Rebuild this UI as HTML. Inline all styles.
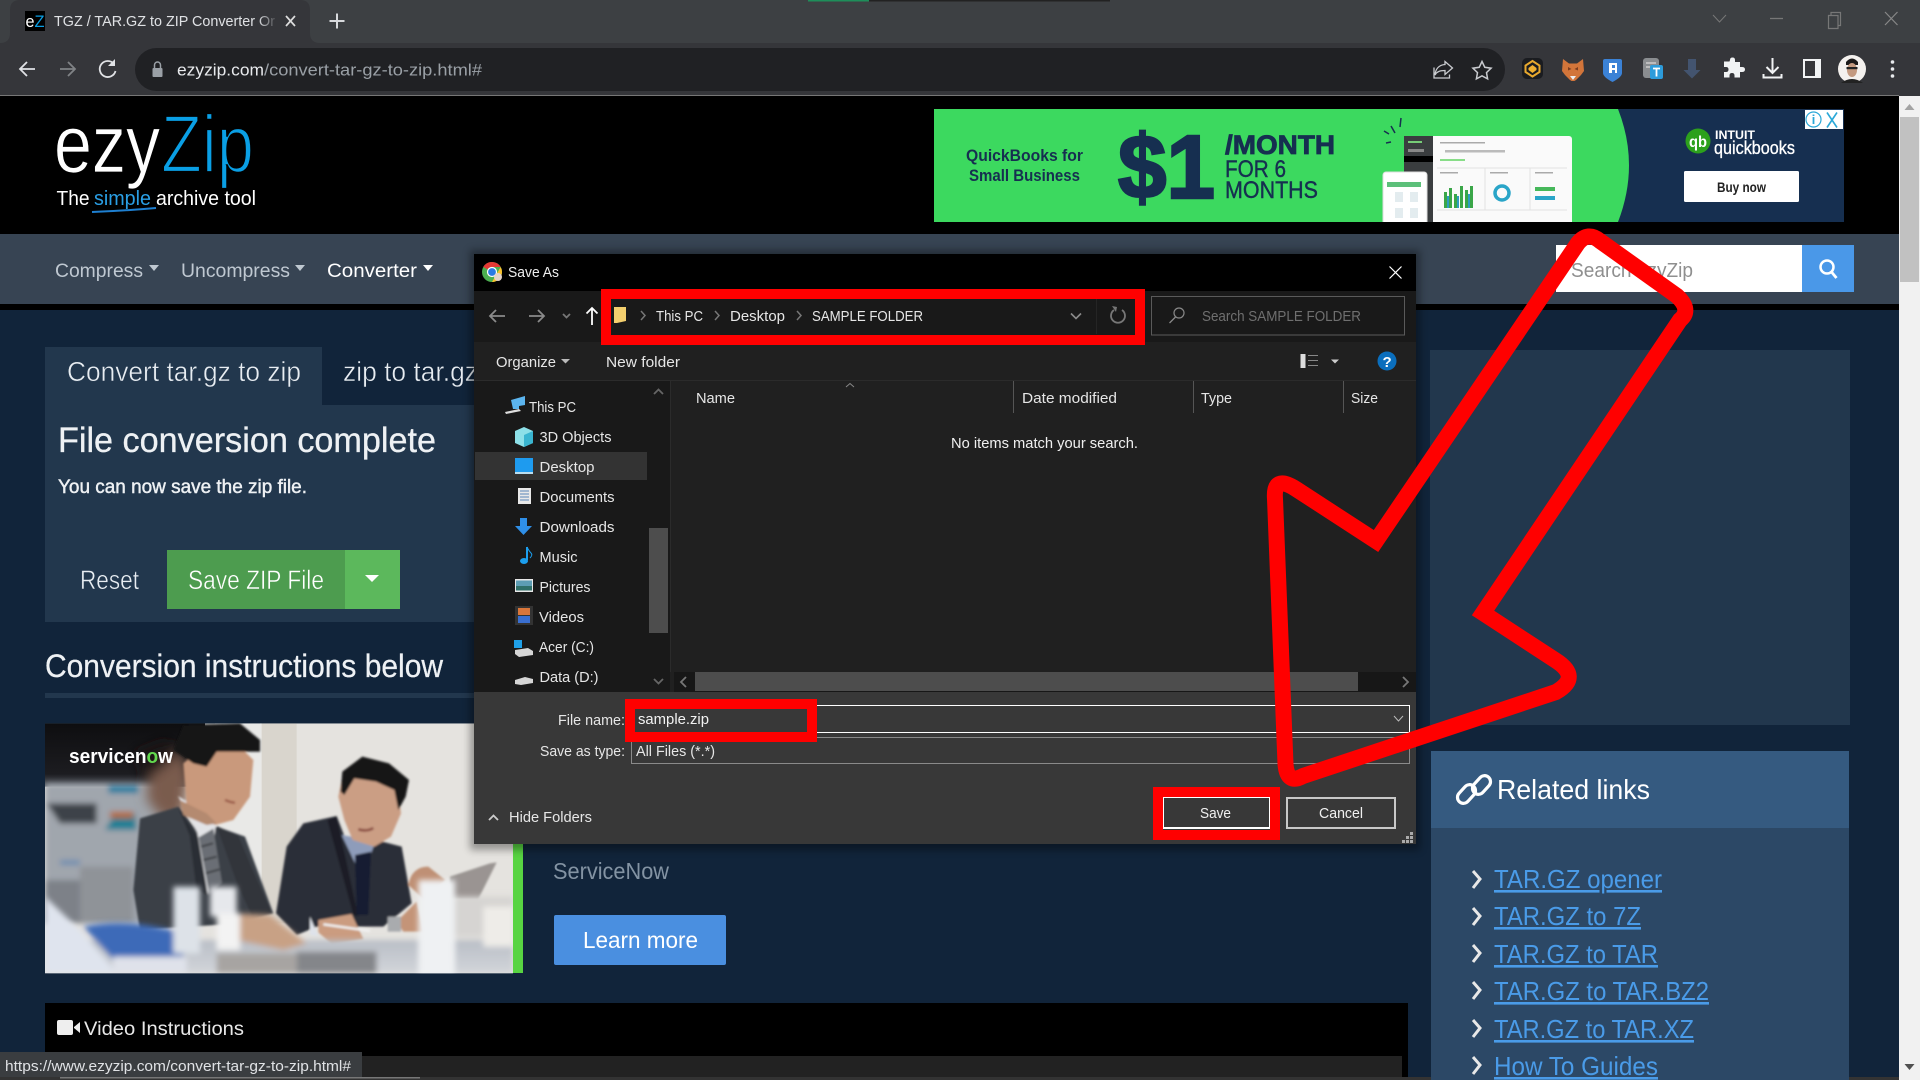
<!DOCTYPE html>
<html><head><meta charset="utf-8"><title>TGZ / TAR.GZ to ZIP Converter</title>
<style>
html,body{margin:0;padding:0;width:1920px;height:1080px;overflow:hidden;background:#11243a}
svg{display:block;position:absolute;left:0;top:0}
text{font-family:"Liberation Sans",sans-serif;white-space:pre}
.d{font-size:14.5px;fill:#e6e6e6}
</style></head><body>
<svg width="1920" height="1080" viewBox="0 0 1920 1080" xmlns="http://www.w3.org/2000/svg">
<defs>
<filter id="b1"><feGaussianBlur stdDeviation="1.5"/></filter>
<filter id="b3"><feGaussianBlur stdDeviation="4"/></filter>
<filter id="p2"><feGaussianBlur stdDeviation="3"/></filter>
<filter id="p8"><feGaussianBlur stdDeviation="9"/></filter>
<filter id="p16"><feGaussianBlur stdDeviation="18"/></filter>
<linearGradient id="fade" x1="0" x2="1"><stop offset="0" stop-color="#35363a" stop-opacity="0"/><stop offset="1" stop-color="#35363a"/></linearGradient>
<linearGradient id="tbl" x1="0" y1="0" x2="0" y2="1"><stop offset="0" stop-color="#b9bec6"/><stop offset="1" stop-color="#d2d5da"/></linearGradient>
<linearGradient id="dk" x1="0" y1="0" x2="0" y2="1"><stop offset="0" stop-color="#0e0e10"/><stop offset=".8" stop-color="#1c1c20"/><stop offset="1" stop-color="#555a62"/></linearGradient>
<clipPath id="ph"><rect x="15" y="10" width="1404" height="750"/></clipPath>
<clipPath id="adc"><rect x="934" y="109" width="910" height="113"/></clipPath>
</defs>

<!-- page -->
<rect width="1920" height="1080" fill="#11243a"/>
<rect y="96" width="1899" height="138" fill="#000"/>
<rect y="234" width="1899" height="70" fill="#374453"/>
<rect y="304" width="1899" height="6" fill="#000"/>

<!-- chrome -->
<rect width="1920" height="43" fill="#3d4043"/>
<rect x="808" y="0" width="61" height="1.5" fill="#1e8e5a"/><rect x="869" y="0" width="241" height="1.5" fill="#222"/>
<path d="M0 43q10 0 10-10V10Q10 0 20 0H300q10 0 10 10V33q0 10 10 10z" fill="#35363a"/>
<rect y="43" width="1920" height="53" fill="#35363a"/>
<rect y="95" width="1899" height="1" fill="#777"/>
<rect x="25" y="11" width="20" height="20" fill="#000"/>
<text x="25.5" y="27" font-size="17" fill="#fff" textLength="9" lengthAdjust="spacingAndGlyphs">e</text>
<text x="34.5" y="27" font-size="17" fill="#0a9fe5" textLength="10" lengthAdjust="spacingAndGlyphs">Z</text>
<text x="54" y="26" font-size="14.5" fill="#e0e2e5" textLength="221" lengthAdjust="spacingAndGlyphs">TGZ / TAR.GZ to ZIP Converter Or</text>
<rect x="258" y="10" width="20" height="24" fill="url(#fade)"/>
<path d="M286 16l9 10M295 16l-9 10" stroke="#ddd" stroke-width="1.7"/>
<path d="M337 13.5v15M329.5 21h15" stroke="#d8dadd" stroke-width="2"/>
<path d="M35 69H20M27 62l-7 7 7 7" stroke="#e0e2e5" stroke-width="1.8" fill="none"/>
<path d="M75 69H60M68 62l7 7-7 7" stroke="#808386" stroke-width="1.8" fill="none"/>
<path d="M114 64a8 8 0 1 0 1.5 7" stroke="#e0e2e5" stroke-width="1.8" fill="none"/><path d="M115 59v7h-7z" fill="#e0e2e5"/>
<rect x="135" y="48" width="1370" height="43" rx="21.5" fill="#202124"/>
<rect x="152.5" y="68" width="10" height="9" rx="1" fill="#9aa0a6"/><path d="M154.5 68v-3a3 3 0 0 1 6 0v3" stroke="#9aa0a6" stroke-width="1.5" fill="none"/>
<text x="177" y="75.500" font-size="16.500" fill="#e8eaed" textLength="87" lengthAdjust="spacingAndGlyphs">ezyzip.com</text>
<text x="264" y="75.500" font-size="16.500" fill="#9aa0a6" textLength="218" lengthAdjust="spacingAndGlyphs">/convert-tar-gz-to-zip.html#</text>
<!-- win controls -->
<path d="M1713 15l6.500 7 6.500-7" stroke="#777" stroke-width="1" fill="none"/>
<path d="M1770 18.500h13" stroke="#777" stroke-width="1.300"/>
<path d="M1828.500 15.500h9.500v13h-9.500zM1831 15.500v-3h9.500v13h-2.500" stroke="#777" stroke-width="1.200" fill="none"/>
<path d="M1885 12l12.500 13M1897.500 12l-12.500 13" stroke="#888" stroke-width="1.200"/>
<!-- toolbar icons -->
<path d="M1434 67.500v10.500h15.500v-3.500M1445 61.500l7.500 6.500-7.500 6.500v-4c-5 0-8 1-10 4.500 .5-6 4-10 10-10.500z" stroke="#c9cbcf" stroke-width="1.300" fill="none"/>
<path d="M1482 61.500l2.800 5.800 6.300.9-4.600 4.400 1.100 6.300-5.600-3-5.600 3 1.100-6.300-4.600-4.400 6.300-.9z" stroke="#c9cbcf" stroke-width="1.500" fill="none"/>
<rect x="1522" y="58" width="21" height="21" rx="5" fill="#1a1c20"/><path d="M1532.500 61l7 4.500v6.500l-7 4.500-7-4.500v-6.500z" fill="none" stroke="#e8a92e" stroke-width="2"/><path d="M1532.500 65l4 3v2l-4 3-4-3v-2z" fill="#f0b030"/>
<path d="M1563 59l6 4.500h8l6-4.500 1 12-3 4-5 5-1.500 1h-3l-1.500-1-5-5-3-4z" fill="#d2753a"/><path d="M1568 67l3.500 2-3.500 1.500zM1578 67l-3.500 2 3.500 1.500z" fill="#7a3d20"/><path d="M1570 76l3 4 3-4z" fill="#eee"/>
<path d="M1605 59h15q2 0 2 2v12q0 4-9.500 9-9.500-5-9.500-9V61q0-2 2-2z" fill="#3b82d6"/><path d="M1609 63h8v10h-2v-3h-3v3h-3zM1612 65v3h3v-3z" fill="#fff"/>
<rect x="1643" y="58" width="16" height="20" rx="3" fill="#8a8d90"/><path d="M1646 63h10M1646 67h6" stroke="#ccc" stroke-width="1.500"/>
<rect x="1650" y="65" width="13" height="14" rx="2" fill="#2d9cdb"/><path d="M1653 68.500h7M1656.500 68.500v8" stroke="#fff" stroke-width="1.800"/>
<path d="M1688 59h8v11h4.500l-8.500 8.500-8.500-8.500h4.500z" fill="#43546f"/>
<path d="M1730 60q0-2.500 2.500-2.500t2.500 2.500v2h5v5h2q3 0 3 2.500t-3 2.500h-2v5.500h-5.500v-2q0-2.500-2.500-2.500t-2.500 2.500v2h-5.500v-5.500h2q2.500 0 2.500-2.500t-2.500-2.500h-2v-5.500h5.500z" fill="#f1f3f4"/>
<path d="M1772.500 58v14M1766.500 67l6 6 6-6M1763.500 74v3.500h18V74" stroke="#f1f3f4" stroke-width="2" fill="none"/>
<rect x="1804" y="60" width="16" height="17" fill="#35363a" stroke="#f1f3f4" stroke-width="2"/><rect x="1815" y="60" width="6" height="17" fill="#f1f3f4"/>
<circle cx="1852" cy="69" r="14" fill="#f4f1ee"/><path d="M1846 62q6-7 12 0v3h-12z" fill="#1c1a1a"/><ellipse cx="1852" cy="70" rx="5" ry="7" fill="#c49a80"/><path d="M1841 83q11-8 22 0l-3 0h-16z" fill="#222"/><rect x="1846.500" y="67" width="11" height="2.200" fill="#222"/>
<circle cx="1892.500" cy="62" r="1.800" fill="#e8eaed"/><circle cx="1892.500" cy="69" r="1.800" fill="#e8eaed"/><circle cx="1892.500" cy="76" r="1.800" fill="#e8eaed"/>

<!-- logo -->
<text x="54" y="172" font-size="82" fill="#fff" stroke="#000" stroke-width=".8" textLength="106" lengthAdjust="spacingAndGlyphs">ezy</text>
<text x="161" y="172" font-size="82" fill="#0a9fe5" stroke="#000" stroke-width="2.200" textLength="93" lengthAdjust="spacingAndGlyphs">Zip</text>
<text x="56.500" y="205" font-size="20.500" fill="#fff" textLength="33" lengthAdjust="spacingAndGlyphs">The</text>
<text x="94" y="205" font-size="20.500" fill="#2a9fe5" textLength="57" lengthAdjust="spacingAndGlyphs">simple</text>
<text x="156" y="205" font-size="20.500" fill="#fff" textLength="100" lengthAdjust="spacingAndGlyphs">archive tool</text>
<path d="M92 212q30-1 64-4" stroke="#1e7fd0" stroke-width="2" fill="none"/>

<!-- nav -->
<text x="55" y="277" font-size="19.500" fill="#bfc8d1" textLength="88" lengthAdjust="spacingAndGlyphs">Compress</text>
<path d="M149 265h10l-5 6z" fill="#bfc8d1"/>
<text x="181" y="277" font-size="19.500" fill="#bfc8d1" textLength="109" lengthAdjust="spacingAndGlyphs">Uncompress</text>
<path d="M295 265h10l-5 6z" fill="#bfc8d1"/>
<text x="327" y="277" font-size="19.500" fill="#fff" textLength="90" lengthAdjust="spacingAndGlyphs">Converter</text>
<path d="M423 265h10l-5 6z" fill="#fff"/>
<rect x="1556" y="245" width="246" height="47" fill="#fff"/>
<rect x="1802" y="245" width="52" height="47" fill="#4a98e8"/>
<circle cx="1827" cy="267" r="6.500" fill="none" stroke="#fff" stroke-width="2.500"/><path d="M1831.500 272l5 6" stroke="#fff" stroke-width="2.800"/>
<text x="1571" y="277" font-size="20.500" fill="#8f8f8f" textLength="122" lengthAdjust="spacingAndGlyphs">Search ezyZip</text>

<!-- ad banner -->
<g clip-path="url(#adc)">
<rect x="934" y="109" width="910" height="113" fill="#3cd95f"/>
<path d="M1618 109q22 56 0 113H1844V109z" fill="#162f50"/>
<g fill="#162f50">
<text x="966" y="161" font-size="16.500" font-weight="bold" textLength="117" lengthAdjust="spacingAndGlyphs">QuickBooks for</text>
<text x="969" y="181" font-size="16.500" font-weight="bold" textLength="111" lengthAdjust="spacingAndGlyphs">Small Business</text>
<text x="1118" y="198" font-size="90" font-weight="bold" stroke="#162f50" stroke-width="2.500" textLength="97" lengthAdjust="spacingAndGlyphs">$1</text>
<text x="1225" y="154" font-size="27" font-weight="bold" stroke="#162f50" stroke-width=".8" textLength="110" lengthAdjust="spacingAndGlyphs">/MONTH</text>
<text x="1225" y="177" font-size="24" stroke="#162f50" stroke-width=".4" textLength="61" lengthAdjust="spacingAndGlyphs">FOR 6</text>
<text x="1225" y="198" font-size="24" stroke="#162f50" stroke-width=".4" textLength="93" lengthAdjust="spacingAndGlyphs">MONTHS</text>
</g>
<path d="M1384 131l5 3M1391 126l4 7M1401 118l-1 9M1386 143l5-1" stroke="#162f50" stroke-width="1.500"/>
<rect x="1404" y="136" width="168" height="90" rx="3" fill="#fafafa"/>
<rect x="1404" y="136" width="29" height="90" fill="#3a3d3f"/>
<rect x="1404" y="156" width="29" height="6" fill="#000"/>
<rect x="1408" y="141" width="14" height="2" fill="#7c7"/><rect x="1408" y="149" width="16" height="3" fill="#888"/>
<rect x="1440" y="142" width="45" height="1.500" fill="#aaa"/><rect x="1445" y="150" width="60" height="2.500" fill="#bbb"/><rect x="1440" y="159" width="25" height="2" fill="#8d8"/>
<path d="M1437 168h130M1437 210h130M1485 168v42M1530 168v42" stroke="#e2e2e2"/>
<rect x="1440" y="172" width="18" height="1.500" fill="#aaa"/><rect x="1490" y="172" width="18" height="1.500" fill="#aaa"/><rect x="1535" y="172" width="18" height="1.500" fill="#aaa"/>
<g fill="#3aa648"><rect x="1444" y="192" width="3" height="16"/><rect x="1449" y="188" width="3" height="20"/><rect x="1454" y="194" width="3" height="14"/><rect x="1460" y="186" width="3" height="22"/><rect x="1465" y="190" width="3" height="18"/><rect x="1470" y="186" width="3" height="22"/></g>
<g fill="#2d9cc0"><rect x="1447" y="196" width="2" height="12"/><rect x="1457" y="196" width="2" height="12"/><rect x="1468" y="194" width="2" height="14"/></g>
<circle cx="1502" cy="193" r="7" fill="none" stroke="#2aa5c8" stroke-width="3.500"/>
<rect x="1535" y="187" width="20" height="4" fill="#46b85a"/><rect x="1535" y="196" width="20" height="4" fill="#2aa5c8"/>
<rect x="1383" y="172" width="44" height="60" rx="3" fill="#fff" stroke="#ddd"/><rect x="1387" y="182" width="34" height="5" fill="#5cc07a"/>
<path d="M1395 192h8v10h-8zM1410 192h8v10h-8zM1395 208h8v10h-8zM1410 208h8v10h-8z" fill="#e3ecef"/>
<circle cx="1698" cy="141" r="12.500" fill="#2ca01c"/>
<text x="1689" y="147" font-size="16" font-weight="bold" fill="#fff" textLength="18" lengthAdjust="spacingAndGlyphs">qb</text>
<text x="1715" y="139" font-size="11.500" font-weight="bold" fill="#fff" textLength="40" lengthAdjust="spacingAndGlyphs">INTUIT</text>
<text x="1714" y="154" font-size="18" fill="#fff" stroke="#fff" stroke-width=".3" textLength="81" lengthAdjust="spacingAndGlyphs">quickbooks</text>
<rect x="1684" y="171" width="115" height="31" rx="1.500" fill="#fff"/>
<text x="1717" y="192" font-size="14" font-weight="bold" fill="#222" textLength="49" lengthAdjust="spacingAndGlyphs">Buy now</text>
<rect x="1805" y="110" width="38" height="19" fill="#fff"/>
<circle cx="1813.500" cy="119.500" r="7.500" fill="none" stroke="#2aa8d8" stroke-width="1.200"/><path d="M1813.500 117v7M1813.500 114.500v1.500" stroke="#2aa8d8" stroke-width="1.800"/>
<path d="M1827 112.500l10 15M1837 112.500l-10 15" stroke="#2aa8d8" stroke-width="1.600"/>
</g>

<!-- scrollbar -->
<rect x="1899" y="96" width="21" height="984" fill="#f1f1f1"/>
<rect x="1900" y="117" width="19" height="165" fill="#c1c1c1"/>
<path d="M1904.500 110l5-6 5 6z" fill="#a3a3a3"/>
<path d="M1904.500 1064l5 6 5-6z" fill="#505050"/>

<!-- left content -->
<rect x="45" y="347" width="277" height="58" fill="#22374d"/>
<rect x="45" y="405" width="1360" height="217" fill="#22374d"/>
<text x="67" y="381" font-size="27.500" fill="#e8edf2" stroke="#22374d" stroke-width=".5" textLength="234" lengthAdjust="spacingAndGlyphs">Convert tar.gz to zip</text>
<text x="343" y="381" font-size="27.500" fill="#e8edf2" stroke="#11243a" stroke-width=".5" textLength="135" lengthAdjust="spacingAndGlyphs">zip to tar.gz</text>
<text x="58" y="452" font-size="35" fill="#eef1f4" stroke="#eef1f4" stroke-width=".3" textLength="378" lengthAdjust="spacingAndGlyphs">File conversion complete</text>
<text x="58" y="493" font-size="19.500" fill="#eef1f4" stroke="#eef1f4" stroke-width=".45" textLength="249" lengthAdjust="spacingAndGlyphs">You can now save the zip file.</text>
<text x="80" y="589" font-size="27" fill="#e8edf2" stroke="#22374d" stroke-width=".5" textLength="59" lengthAdjust="spacingAndGlyphs">Reset</text>
<rect x="167" y="550" width="178" height="59" fill="#4d9c4f"/>
<rect x="345" y="550" width="55" height="59" fill="#5cb85c"/>
<text x="188" y="589" font-size="27" fill="#fff" stroke="#4d9c4f" stroke-width=".5" textLength="136" lengthAdjust="spacingAndGlyphs">Save ZIP File</text>
<path d="M365 575h14l-7 7z" fill="#fff"/>
<text x="45" y="677" font-size="32" fill="#eef1f4" stroke="#eef1f4" stroke-width=".25" textLength="398" lengthAdjust="spacingAndGlyphs">Conversion instructions below</text>
<rect x="45" y="693" width="430" height="5" fill="#22374d"/>

<!-- photo ad: coordinates in 3x crop space -->
<g transform="translate(40 720) scale(.33333)">
<g clip-path="url(#ph)">
<rect x="15" y="10" width="1404" height="750" fill="#e5e3df"/>
<rect x="660" y="10" width="110" height="600" fill="#d9d5cd"/>
<rect x="525" y="10" width="140" height="500" fill="#e9e9e7"/>
<rect x="15" y="10" width="480" height="190" fill="url(#dk)"/>
<g filter="url(#p8)">
<rect x="15" y="190" width="380" height="420" fill="#a0a6ad"/>
<rect x="15" y="480" width="120" height="130" fill="#7d8188"/>
<path d="M20 250h150v60H60z" fill="#3e4248"/>
<rect x="205" y="195" width="90" height="25" fill="#2a7fa0"/>
<path d="M195 330l30-50 60 0 5 50z" fill="#1f7f94"/>
<rect x="210" y="275" width="70" height="20" fill="#b56a3a"/>
<rect x="60" y="420" width="60" height="15" fill="#6f8db0"/>
<rect x="120" y="440" width="160" height="170" fill="#8f9398"/>
</g>
<g filter="url(#p16)">
<path d="M330 110l90-20 30 70-20 130-60 10-50-60z" fill="#7a5c4e"/>
<path d="M280 100l100-40 30 50-90 70z" fill="#1a1614"/>
</g>
<g filter="url(#p2)">
<!-- man 1 -->
<path d="M280 510l20-215 115-35 70 90 45-30 85 30 35 95 50 135-100 30-300 20z" fill="#3b3f47"/>
<path d="M414 228l115 70-25 230-32-190z" fill="#e2e3e6"/>
<path d="M414 262l60 90 30 175-35-20-20-160z" fill="#2b2e34"/>
<path d="M476 352l44-26 26 162-38 35z" fill="#6a6e74"/>
<path d="M483 380l36-10M490 420l40-10M497 460l42-12" stroke="#3c3f44" stroke-width="6"/>
<path d="M530 318l65 30 40 95 60 135-60 8-45-100z" fill="#31343b"/>
<path d="M430 130l60-50 100-10 50 50-10 110-50 70-55 15-85-55z" fill="#c9997c"/>
<path d="M420 240l80 40 30 30-30 5-70-30z" fill="#b48a70"/>
<path d="M400 90l30-75 170-5 60 50 0 35-60 0-70 0-30 45-40-10z" fill="#121316"/>
<path d="M555 240q20 8 30 8" stroke="#9b5b4a" stroke-width="7"/>
<!-- man 2 -->
<path d="M708 580l32-200 50-70 100-22 50 130 60-60 85 22 30 170-85 70-200 0-60 25z" fill="#2c2f38"/>
<path d="M905 345l102 18-15 40-45 30z" fill="#8e9cba"/>
<path d="M862 300l28-10 65 300-15-5z" fill="#1d1f25"/>
<path d="M945 405l48-10-8 190-35 0z" fill="#141d33"/>
<path d="M895 230l15-70 90-10 75 70 8 60-30 70-50 30-65-20-25-60z" fill="#cb9e84"/>
<path d="M902 215l5-60 60-45 80 20 60 50-10 50-22 40-12-60-55-25-65-10-30 50z" fill="#141518"/>
<path d="M955 328q25 8 45-4" stroke="#8c4e42" stroke-width="8" fill="none"/>
<path d="M1105 495q10-55 60-55l50 40-60 60z" fill="#bf9074"/>
<path d="M1070 605l60-60 20 90-60 0z" fill="#c49478"/>
<rect x="1043" y="590" width="40" height="45" fill="#a9abae"/>
<path d="M810 590l25 60-25-5z" fill="#dfe3ea"/>
<path d="M835 600l100-18 35 75-95 15-40-35z" fill="#cb9c80"/>
<path d="M850 613l140 20" stroke="#f2f2f2" stroke-width="7"/>
<path d="M1230 470l120-40 20-3-55 110-85 0z" fill="#9a9492"/>
</g>
<g filter="url(#p8)">
<path d="M15 660H1419V760H15z" fill="url(#tbl)"/>
<rect x="770" y="695" width="240" height="65" fill="#84868a"/>
<rect x="530" y="700" width="240" height="60" fill="#a7a4a2"/>
<path d="M590 580l100 5 110 85-70 20-140-30z" fill="#c8a185"/>
<path d="M15 530L130 640 230 760H15z" fill="#dfe4ee"/>
<path d="M130 620q130-30 300 20l0 70-210 10z" fill="#3d6ab8"/>
<path d="M220 710h220v50H220z" fill="#dfe2ea"/>
<rect x="400" y="500" width="80" height="200" fill="#dde2e8"/>
<rect x="510" y="500" width="80" height="90" fill="#e6e8ec"/>
<rect x="530" y="580" width="70" height="110" fill="#f3f3f3"/>
<path d="M1230 530h190v120h-190z" fill="#d6d4d2"/>
<rect x="1135" y="480" width="110" height="290" fill="#eff1f3"/>
<rect x="1330" y="560" width="90" height="120" fill="#eeece8"/>
</g>
</g>
</g>
<text x="69" y="763" font-size="20" font-weight="bold" fill="#fff" textLength="104" lengthAdjust="spacingAndGlyphs">servicen<tspan fill="#62d84e">o</tspan>w</text>
<rect x="513" y="723" width="10" height="250" fill="#58d442"/>
<text x="553" y="879" font-size="23" fill="#8393a3" textLength="116" lengthAdjust="spacingAndGlyphs">ServiceNow</text>
<rect x="554" y="915" width="172" height="50" rx="2" fill="#4a8fe0"/>
<text x="583" y="948" font-size="23" fill="#fff" textLength="115" lengthAdjust="spacingAndGlyphs">Learn more</text>

<!-- video block -->
<rect x="45" y="1003" width="1363" height="74" fill="#000"/>
<rect x="57" y="1020" width="16" height="15" rx="2" fill="#eee"/><path d="M74 1027l6-5v11l-6-5z" fill="#eee"/>
<text x="84" y="1035" font-size="19.500" fill="#e8e8e8" textLength="160" lengthAdjust="spacingAndGlyphs">Video Instructions</text>
<rect x="45" y="1056" width="1357" height="21" fill="#222"/>
<rect x="0" y="1052" width="362" height="25" fill="#3a3d40"/>
<text x="5" y="1071" font-size="14.500" fill="#e0e2e5" textLength="346" lengthAdjust="spacingAndGlyphs">https://www.ezyzip.com/convert-tar-gz-to-zip.html#</text>
<rect x="0" y="1077" width="1899" height="3" fill="#333"/>
<rect x="60" y="1077" width="360" height="1.500" fill="#777"/>

<!-- right col -->
<rect x="1430" y="350" width="420" height="375" fill="#22374d"/>
<rect x="1431" y="751" width="418" height="329" fill="#2c4866"/>
<rect x="1431" y="751" width="418" height="77" fill="#355a80"/>
<g fill="none" stroke="#fff" stroke-width="3.200"><rect x="1456" y="788" width="21" height="12" rx="6" transform="rotate(-48 1466.500 794)"/><rect x="1471" y="779" width="21" height="12" rx="6" transform="rotate(-48 1481.500 785)"/></g>
<text x="1497" y="799" font-size="28" fill="#fff" textLength="153" lengthAdjust="spacingAndGlyphs">Related links</text>
<g fill="#4a9be8" font-size="26" text-decoration="underline">
<text x="1494" y="888" textLength="168" lengthAdjust="spacingAndGlyphs">TAR.GZ opener</text>
<text x="1494" y="925" textLength="147" lengthAdjust="spacingAndGlyphs">TAR.GZ to 7Z</text>
<text x="1494" y="963" textLength="164" lengthAdjust="spacingAndGlyphs">TAR.GZ to TAR</text>
<text x="1494" y="1000" textLength="215" lengthAdjust="spacingAndGlyphs">TAR.GZ to TAR.BZ2</text>
<text x="1494" y="1038" textLength="200" lengthAdjust="spacingAndGlyphs">TAR.GZ to TAR.XZ</text>
<text x="1494" y="1075" textLength="164" lengthAdjust="spacingAndGlyphs">How To Guides</text>
</g>
<g stroke="#e8e8e8" stroke-width="3" fill="none"><path d="M1473 871l7 8-7 9"/><path d="M1473 908l7 8-7 9"/><path d="M1473 945l7 8-7 9"/><path d="M1473 982l7 8-7 9"/><path d="M1473 1020l7 8-7 9"/><path d="M1473 1057l7 8-7 9"/></g>

<!-- dialog -->
<rect x="470" y="250" width="950" height="600" fill="#000" opacity=".35" filter="url(#b3)"/>
<rect x="474" y="254" width="942" height="590" fill="#202020"/>
<rect x="474" y="254" width="942" height="37" fill="#000"/>
<rect x="474" y="291" width="942" height="51" fill="#191919"/>
<rect x="474" y="381" width="196" height="311" fill="#191919"/>
<rect x="670" y="381" width="1" height="291" fill="#2b2b2b"/>
<rect x="474" y="380" width="942" height="1" fill="#2b2b2b"/>
<rect x="474" y="692" width="942" height="152" fill="#383838"/>
<circle cx="492" cy="272" r="10" fill="#4caf50"/><path d="M492 262a10 10 0 0 1 8.700 5H492a5 5 0 0 0-4.400 2.500l-4.300-2.600A10 10 0 0 1 492 262z" fill="#e53935"/><path d="M502 272a10 10 0 0 1-10 10l4-7 4.700-8a10 10 0 0 1 1.300 5z" fill="#fbc02d"/><circle cx="492" cy="272" r="4.500" fill="#2a7ae4" stroke="#fff" stroke-width="1.200"/><circle cx="498" cy="277" r="4" fill="#e6d4c8"/>
<text x="508" y="277" font-size="14.500" fill="#eee" textLength="51" lengthAdjust="spacingAndGlyphs">Save As</text>
<path d="M1389.500 266.500l12 12M1401.500 266.500l-12 12" stroke="#fff" stroke-width="1.200"/>
<!-- address -->
<path d="M505 316h-15M496 310l-6 6 6 6" stroke="#8a8a8a" stroke-width="1.800" fill="none"/>
<path d="M529 316h15M538 310l6 6-6 6" stroke="#8a8a8a" stroke-width="1.800" fill="none"/>
<path d="M563 314l3.500 3.500 3.500-3.500" stroke="#777" stroke-width="1.800" fill="none"/>
<path d="M592 325v-17M586.500 313.500l5.500-5.500 5.500 5.500" stroke="#fff" stroke-width="1.800" fill="none"/>
<rect x="611" y="299" width="524" height="35" fill="#191919"/>
<path d="M614 307h12v14l-9 2h-3z" fill="#f3cf6e"/>
<path d="M641 311l4 4.500-4 4.500M715 311l4 4.500-4 4.500M797 311l4 4.500-4 4.500" stroke="#777" stroke-width="1.500" fill="none"/>
<text x="656" y="321" class="d" textLength="47" lengthAdjust="spacingAndGlyphs">This PC</text>
<text x="730" y="321" class="d" textLength="55" lengthAdjust="spacingAndGlyphs">Desktop</text>
<text x="812" y="321" class="d" textLength="111" lengthAdjust="spacingAndGlyphs">SAMPLE FOLDER</text>
<path d="M1071 313.500l5 5 5-5" stroke="#8a8a8a" stroke-width="1.600" fill="none"/>
<path d="M1096.500 299v35" stroke="#252525"/>
<path d="M1114 310a7 7 0 1 0 8 0" stroke="#777" stroke-width="1.800" fill="none"/><path d="M1112 306l5 1-1 5z" fill="#777"/>
<path d="M601 294h539v46H606v-46" fill="none" stroke="#f00" stroke-width="10"/>
<rect x="1151.500" y="296.500" width="253" height="38.500" fill="none" stroke="#5a5a5a"/>
<circle cx="1179" cy="313" r="5" fill="none" stroke="#888" stroke-width="1.200"/><path d="M1175.500 317l-6 6" stroke="#888" stroke-width="1.300"/>
<text x="1202" y="321" class="d" style="fill:#6f6f6f" textLength="159" lengthAdjust="spacingAndGlyphs">Search SAMPLE FOLDER</text>
<!-- toolbar -->
<text x="496" y="367" class="d" textLength="60" lengthAdjust="spacingAndGlyphs">Organize</text>
<path d="M561 359h9l-4.500 4.500z" fill="#bbb"/>
<text x="606" y="367" class="d" textLength="74" lengthAdjust="spacingAndGlyphs">New folder</text>
<rect x="1300.500" y="354" width="5" height="14" fill="#ddd"/><path d="M1308 355.500h10M1308 360.500h10M1308 365.500h10" stroke="#888"/>
<path d="M1331 359.500h8l-4 4z" fill="#ccc"/>
<circle cx="1387" cy="361" r="9.500" fill="#0a6ebd"/>
<text x="1382.500" y="367" font-size="15" font-weight="bold" fill="#fff">?</text>
<!-- tree -->
<rect x="475" y="452" width="172" height="28" fill="#333"/>
<path d="M511 400l14-4v9l-6 1 0 3h-6z" fill="#5bb4ee"/><path d="M505 412l14-3 2 2-15 3z" fill="#ddd"/>
<text x="529" y="412" class="d" textLength="47" lengthAdjust="spacingAndGlyphs">This PC</text>
<path d="M515 431l9-4 9 4v12l-9 4-9-4z" fill="#8de0e8"/><path d="M524 435v12l9-4v-12z" fill="#3ab5d0"/>
<text x="539.500" y="442" class="d" textLength="72" lengthAdjust="spacingAndGlyphs">3D Objects</text>
<rect x="515" y="458" width="18" height="14" fill="#1e9bef"/><rect x="515" y="472" width="18" height="2" fill="#bde"/>
<text x="539.500" y="472" class="d" textLength="55" lengthAdjust="spacingAndGlyphs">Desktop</text>
<rect x="518" y="488" width="13" height="16" fill="#e8e8e8"/><path d="M520 491h9M520 494h9M520 497h9M520 500h9" stroke="#5a86b8"/>
<text x="539.500" y="502" class="d" textLength="75" lengthAdjust="spacingAndGlyphs">Documents</text>
<path d="M520 518h7v8h5l-8.500 9-8.500-9h5z" fill="#2f8fe8"/>
<text x="539.500" y="532" class="d" textLength="75" lengthAdjust="spacingAndGlyphs">Downloads</text>
<path d="M527 547v13" stroke="#1c9fee" stroke-width="2"/><path d="M527 547q2 4 4 6t-1 5" stroke="#1c9fee" fill="none"/><ellipse cx="524" cy="561" rx="4" ry="3" fill="#1c9fee"/>
<text x="539.500" y="562" class="d" textLength="38" lengthAdjust="spacingAndGlyphs">Music</text>
<rect x="515" y="579" width="18" height="13" fill="#e8e8e8"/><rect x="516" y="580.500" width="16" height="10" fill="#5d9db4"/><rect x="516" y="586" width="16" height="4.500" fill="#2f6f68"/>
<text x="539.500" y="592" class="d" textLength="51" lengthAdjust="spacingAndGlyphs">Pictures</text>
<rect x="515" y="606" width="18" height="19" fill="#333"/><rect x="518" y="608" width="12" height="7" fill="#d9763a"/><rect x="518" y="616" width="12" height="7" fill="#3a6fd0"/>
<text x="539" y="622" class="d" textLength="45" lengthAdjust="spacingAndGlyphs">Videos</text>
<rect x="514" y="640" width="8" height="8" fill="#1fa0e8"/><path d="M515 650l13-2 5 3v4l-14 2-4-3z" fill="#d5d5d5"/>
<text x="539" y="652" class="d" textLength="55" lengthAdjust="spacingAndGlyphs">Acer (C:)</text>
<path d="M515 680l10-3 8 2v4l-12 2-6-1z" fill="#d5d5d5"/>
<text x="539.500" y="682" class="d" textLength="59" lengthAdjust="spacingAndGlyphs">Data (D:)</text>
<rect x="649" y="528" width="19" height="105" fill="#4d4d4d"/>
<path d="M654 394l4.500-4.500 4.500 4.500M654 679l4.500 4.500 4.500-4.500" stroke="#666" stroke-width="1.800" fill="none"/>
<!-- header -->
<text x="696" y="403" class="d" textLength="39" lengthAdjust="spacingAndGlyphs">Name</text>
<path d="M846 387l4-3.500 4 3.500" stroke="#888" fill="none"/>
<path d="M1013.500 381v32M1193.500 381v32M1343.500 381v32" stroke="#555"/>
<text x="1022" y="403" class="d" textLength="95" lengthAdjust="spacingAndGlyphs">Date modified</text>
<text x="1201" y="403" class="d" textLength="31" lengthAdjust="spacingAndGlyphs">Type</text>
<text x="1351" y="403" class="d" textLength="27" lengthAdjust="spacingAndGlyphs">Size</text>
<text x="951" y="448" class="d" style="fill:#f0f0f0" textLength="187" lengthAdjust="spacingAndGlyphs">No items match your search.</text>
<!-- h scroll -->
<rect x="674" y="672" width="742" height="20" fill="#171717"/>
<rect x="695" y="672" width="663" height="19" fill="#4d4d4d"/>
<path d="M686 677l-5 5 5 5" stroke="#777" stroke-width="1.800" fill="none"/>
<path d="M1403 677l5 5-5 5" stroke="#777" stroke-width="1.800" fill="none"/>
<!-- bottom -->
<text x="558" y="725" class="d" textLength="67" lengthAdjust="spacingAndGlyphs">File name:</text>
<text x="540" y="756" class="d" textLength="85" lengthAdjust="spacingAndGlyphs">Save as type:</text>
<rect x="631.500" y="705.500" width="778" height="27" fill="none" stroke="#fff"/>
<path d="M1394 716l4.500 5 4.500-5" stroke="#bbb" fill="none"/>
<rect x="631.500" y="737.500" width="778" height="26" fill="none" stroke="#8a8a8a"/>
<text x="636" y="756" class="d" textLength="79" lengthAdjust="spacingAndGlyphs">All Files (*.*)</text>
<rect x="630" y="704" width="182" height="33" fill="#383838" stroke="#f00" stroke-width="10"/>
<text x="638" y="724" class="d" style="fill:#f2f2f2" textLength="71" lengthAdjust="spacingAndGlyphs">sample.zip</text>
<path d="M489 820l4.500-4.500 4.500 4.500" stroke="#ccc" stroke-width="1.800" fill="none"/>
<text x="509" y="822" class="d" textLength="83" lengthAdjust="spacingAndGlyphs">Hide Folders</text>
<rect x="1158" y="792" width="117" height="43" fill="none" stroke="#f00" stroke-width="10"/>
<rect x="1163.500" y="797.500" width="106" height="30" fill="#383838" stroke="#fff"/><rect x="1163" y="827" width="107" height="2" fill="#fff"/>
<text x="1200" y="818" class="d" style="fill:#f0f0f0" textLength="31" lengthAdjust="spacingAndGlyphs">Save</text>
<rect x="1287" y="798" width="108" height="30" fill="#383838" stroke="#c8c8c8" stroke-width="2"/>
<text x="1319" y="818" class="d" style="fill:#f0f0f0" textLength="44" lengthAdjust="spacingAndGlyphs">Cancel</text>
<g fill="#aaa"><rect x="1410" y="832" width="3" height="3"/><rect x="1406" y="836" width="3" height="3"/><rect x="1410" y="836" width="3" height="3"/><rect x="1402" y="840" width="3" height="3"/><rect x="1406" y="840" width="3" height="3"/><rect x="1410" y="840" width="3" height="3"/></g>

<!-- big red arrow -->
<path d="M1376 541L1578 243Q1588 231 1600 241L1677 296Q1692 310 1680 320L1483 613L1555 660Q1582 677 1556 692L1303 776Q1287 785 1285.500 764L1275 499Q1273 474 1296 489Z" fill="none" stroke="#f00" stroke-width="16" stroke-linejoin="miter" stroke-miterlimit="8"/>
</svg>
</body></html>
